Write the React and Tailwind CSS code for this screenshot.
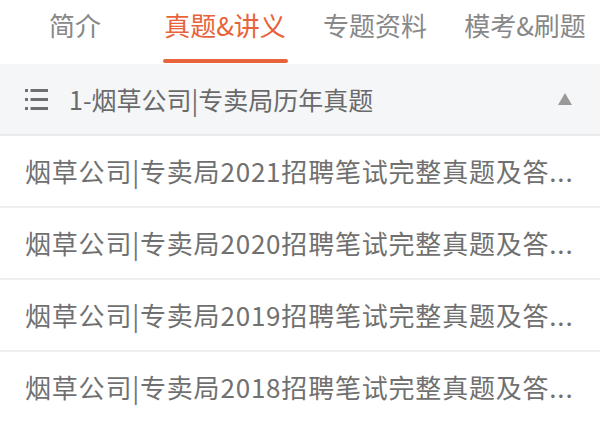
import { useState } from 'react';

const tabs = ['简介', '真题&讲义', '专题资料', '模考&刷题'];

const items = [
  '烟草公司|专卖局2021招聘笔试完整真题及答...',
  '烟草公司|专卖局2020招聘笔试完整真题及答...',
  '烟草公司|专卖局2019招聘笔试完整真题及答...',
  '烟草公司|专卖局2018招聘笔试完整真题及答...',
];

const ListIcon = () => (
  <svg width="23" height="21" viewBox="0 0 23 21" fill="#6f6f6f">
    <rect x="0" y="0" width="3" height="3" />
    <rect x="5.5" y="0" width="17.5" height="3" />
    <rect x="0" y="9" width="3" height="3" />
    <rect x="5.5" y="9" width="17.5" height="3" />
    <rect x="0" y="18" width="3" height="3" />
    <rect x="5.5" y="18" width="17.5" height="3" />
  </svg>
);

const App = () => {
  const [active, setActive] = useState(1);

  return (
    <div
      className="w-[600px] h-[422px] bg-white overflow-hidden"
      style={{ fontFamily: '"Noto Sans CJK SC", "Noto Sans", sans-serif' }}
    >
      {/* Tabs */}
      <div className="grid grid-cols-4 h-[64px]">
        {tabs.map((t, i) => (
          <button
            key={t}
            onClick={() => setActive(i)}
            className="flex flex-col items-center h-full"
          >
            <span
              className={`mt-[9px] text-[26px] leading-[32px] ${
                active === i ? 'text-[#e8633b]' : 'text-[#888]'
              }`}
            >
              {t}
            </span>
            {active === i && (
              <span className="mt-auto mb-[1px] h-[4px] w-[125px] rounded-full bg-[#e8633b]" />
            )}
          </button>
        ))}
      </div>

      {/* Section header */}
      <div className="h-[72px] bg-[#f5f6f8] border-b-2 border-[#ebebeb] flex items-center pl-[25px] pr-[28px]">
        <ListIcon />
        <span className="ml-[21px] text-[25px] text-[#6a6a6a] leading-none">1-烟草公司|专卖局历年真题</span>
        <svg className="ml-auto" width="14" height="12" viewBox="0 0 14 12">
          <path d="M7 0 L14 12 L0 12 Z" fill="#999" />
        </svg>
      </div>

      {/* Items */}
      {items.map((it) => (
        <div key={it} className="h-[72px] border-b-2 border-[#eeeeee] flex items-center px-[25px]">
          <span className="whitespace-nowrap text-[26px] tracking-[0.8px] text-[#707070] leading-none">{it}</span>
        </div>
      ))}
    </div>
  );
};

export default App;
